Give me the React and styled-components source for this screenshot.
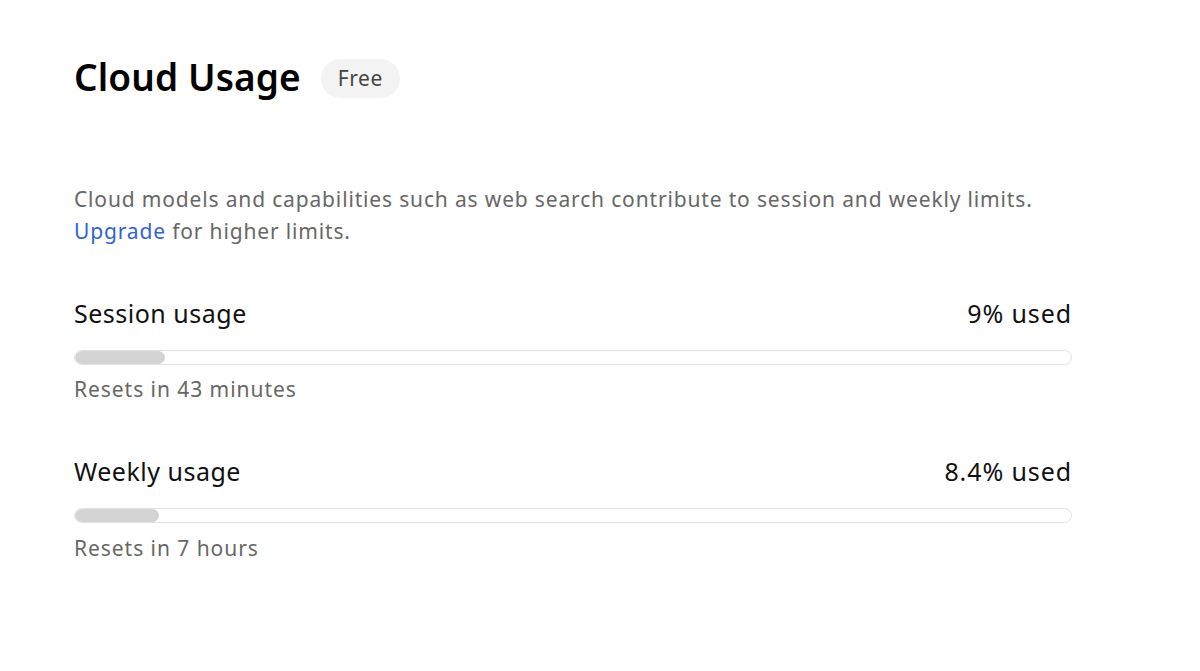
import React from "react";
import styled, { createGlobalStyle } from "styled-components";

const GlobalStyle = createGlobalStyle`
  html, body {
    margin: 0;
    padding: 0;
    background: #ffffff;
  }
  body {
    font-family: "Noto Sans", "Open Sans", sans-serif;
  }
`;

const Page = styled.div`
  width: 998px;
  padding: 52px 0 0 74px;
`;

const TitleRow = styled.div`
  display: flex;
  align-items: center;
  gap: 20px;
`;

const Title = styled.h1`
  margin: 0;
  font-size: 37px;
  font-weight: 600;
  color: #000;
  line-height: 50px;
  letter-spacing: 0.1px;
`;

const Badge = styled.span`
  display: inline-flex;
  align-items: center;
  height: 39px;
  padding: 0 17px;
  border-radius: 20px;
  background: #f3f3f3;
  color: #444;
  font-size: 21px;
  letter-spacing: 0.6px;
  margin-top: 2px;
`;

const Description = styled.p`
  margin: 81px 0 0;
  font-size: 21px;
  line-height: 32px;
  color: #676767;
  letter-spacing: 0.84px;
`;

const Link = styled.a`
  color: #2f63d8;
  text-decoration: none;
`;

const Section = styled.div`
  margin-top: ${(p) => p.$gap}px;
`;

const LabelRow = styled.div`
  display: flex;
  justify-content: space-between;
  align-items: center;
  font-size: 25px;
  line-height: 34px;
  color: #111;
  letter-spacing: 0.5px;
`;

const Used = styled.span`
  letter-spacing: 0.9px;
`;

const Track = styled.div`
  margin-top: 20px;
  height: 15px;
  box-sizing: border-box;
  border: 1.5px solid #e2e2e2;
  border-radius: 8px;
  overflow: hidden;
`;

const Fill = styled.div`
  height: 100%;
  background: #d4d4d4;
  border-radius: 8px;
`;

const Note = styled.div`
  margin-top: ${(p) => p.$gap}px;
  font-size: 21px;
  line-height: 28px;
  color: #676767;
  letter-spacing: 0.95px;
`;

const usage = [
  { label: "Session usage", pct: 9, used: "9% used", note: "Resets in 43 minutes", gap: 49, noteGap: 10 },
  { label: "Weekly usage", pct: 8.4, used: "8.4% used", note: "Resets in 7 hours", gap: 51, noteGap: 11 },
];

const App = () => {
  return (
    <React.Fragment>
      <GlobalStyle />
      <Page>
        <TitleRow>
          <Title>Cloud Usage</Title>
          <Badge>Free</Badge>
        </TitleRow>
        <Description>
          Cloud models and capabilities such as web search contribute to session and weekly limits.
          <br />
          <Link href="#">Upgrade</Link> for higher limits.
        </Description>
        {usage.map((u) => (
          <Section key={u.label} $gap={u.gap}>
            <LabelRow>
              <span>{u.label}</span>
              <Used>{u.used}</Used>
            </LabelRow>
            <Track>
              <Fill style={{ width: `${u.pct}%` }} />
            </Track>
            <Note $gap={u.noteGap}>{u.note}</Note>
          </Section>
        ))}
      </Page>
    </React.Fragment>
  );
};

export default App;
